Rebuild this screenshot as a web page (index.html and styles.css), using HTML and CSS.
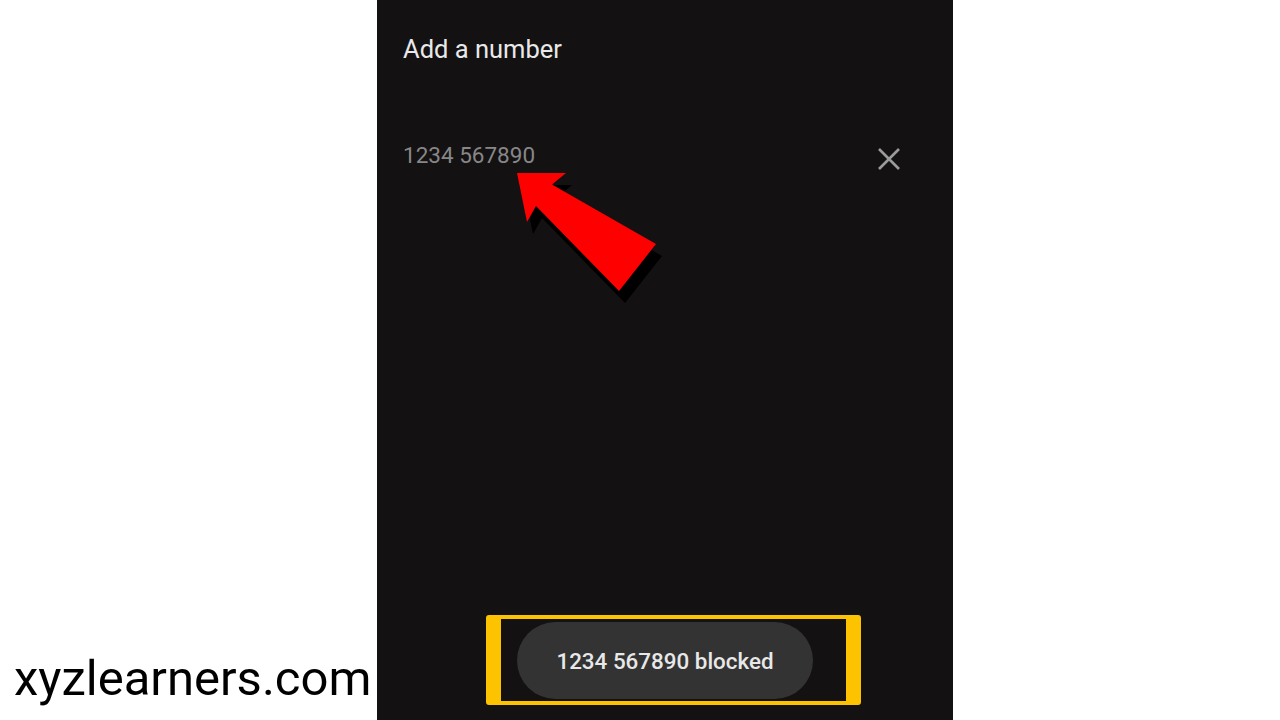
FILE: index.html
```html
<!DOCTYPE html>
<html lang="en">
<head>
<meta charset="utf-8">
<title>Add a number</title>
<link rel="stylesheet" href="styles.css">
</head>
<body>
<div class="page">
  <div class="side">
    <div class="watermark">xyzlearners.com</div>
  </div>
  <div class="panel">
    <div class="title">Add a number</div>
    <div class="field-row">
      <div class="field-text">1234 567890</div>
      <svg class="clear-icon" viewBox="0 0 24 24" width="24" height="24" aria-hidden="true">
        <path d="M2 2 L22 22 M22 2 L2 22" stroke="#9b9b9b" stroke-width="2.6" stroke-linecap="butt" fill="none"/>
      </svg>
    </div>
    <div class="spacer"></div>
    <div class="toast">1234 567890 blocked</div>

    <svg class="arrow" viewBox="0 0 576 720" width="576" height="720" aria-hidden="true">
      <polygon points="146,185 195,185 181,196.5 285,256 248,303 165,218 156,234" fill="#000"/>
      <polygon points="140,173 189,173 175,184.5 279,244 242,291 159,206 150,222" fill="#ff0000"/>
    </svg>
    <div class="highlight"></div>
  </div>
  <div class="side-right"></div>
</div>
</body>
</html>
```

FILE: styles.css
```css
html, body {
  margin: 0;
  padding: 0;
  background: #ffffff;
  overflow: hidden;
}

.page {
  display: flex;
  width: 1280px;
  height: 720px;
  font-family: Roboto, "Liberation Sans", Arial, sans-serif;
}

.side {
  width: 377px;
  flex: 0 0 377px;
  display: flex;
  flex-direction: column;
  justify-content: flex-end;
}

.watermark {
  font-size: 49px;
  line-height: 56px;
  color: #000000;
  padding-left: 14px;
  margin-bottom: 13px;
  white-space: nowrap;
}

.panel {
  position: relative;
  width: 576px;
  flex: 0 0 576px;
  height: 720px;
  background: #131112;
  display: flex;
  flex-direction: column;
  box-sizing: border-box;
  padding: 34px 52px 0 26px;
}

.side-right {
  flex: 1;
}

.title {
  font-size: 25.5px;
  line-height: 30px;
  color: #e9e9e9;
}

.field-row {
  margin-top: 77px;
  display: flex;
  justify-content: space-between;
  align-items: flex-start;
  height: 28px;
}

.field-text {
  font-size: 22.5px;
  line-height: 28px;
  color: #878787;
}

.clear-icon {
  margin-top: 6px;
  width: 24px;
  height: 24px;
}

.spacer {
  flex: 1;
}

.toast {
  align-self: flex-start;
  margin-left: 114px;
  width: 296px;
  height: 77px;
  border-radius: 39px;
  background: #333333;
  color: #e8e8e8;
  font-size: 22.4px;
  font-weight: 500;
  display: flex;
  align-items: center;
  justify-content: center;
  margin-bottom: 21px;
}

.arrow {
  position: absolute;
  left: 0;
  top: 0;
  pointer-events: none;
}

.highlight {
  position: absolute;
  left: 109px;
  top: 615px;
  width: 345px;
  height: 82px;
  border-style: solid;
  border-color: #fdc300;
  border-width: 4px 15px;
  border-radius: 3px;
  pointer-events: none;
}
```
